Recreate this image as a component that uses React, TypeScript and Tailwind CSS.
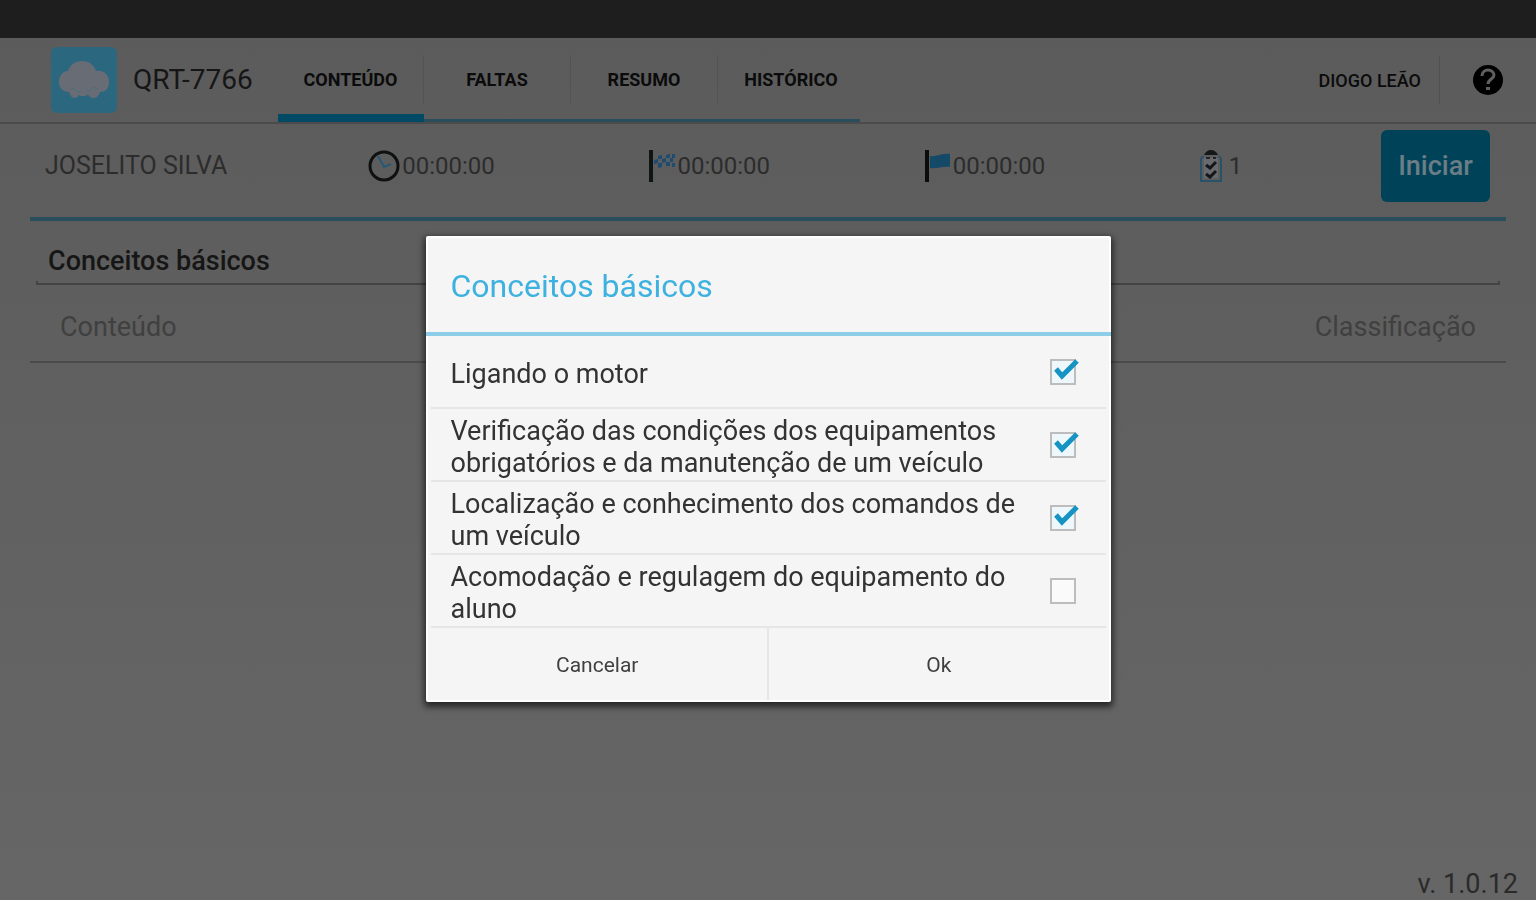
import { useState } from "react";

const tabs = ["CONTEÚDO", "FALTAS", "RESUMO", "HISTÓRICO"];

const tabWidths = ["w-[146px]", "w-[147px]", "w-[147px]", "w-[142px] pl-1"];

const lessons = [
  { id: "motor", label: "Ligando o motor", done: true },
  { id: "equipamentos", label: "Verificação das condições dos equipamentos obrigatórios e da manutenção de um veículo", done: true },
  { id: "comandos", label: "Localização e conhecimento dos comandos de um veículo", done: true },
  { id: "acomodacao", label: "Acomodação e regulagem do equipamento do aluno", done: false },
];

function CloudLogo() {
  return (
    <svg viewBox="0 0 66 66" className="size-[66px] shrink-0" aria-hidden="true">
      <rect width="66" height="66" rx="6" fill="#2c6780" />
      <path
        d="M18 45c-6 0-10-4-10-10 0-7 4-11 9-11 2-6 7-10 14-10s12 4 14 10c8-1 13 4 13 11s-4 10-9 10c-1 3-3 6-6 6s-5-1-6-4c-1 2-3 2-5 2s-3 0-4-1c-1 2-3 3-5 3-2 0-4-3-5-6z"
        fill="#686c75"
      />
      <g fill="none" stroke="#4e6c7b" strokeWidth="1">
        <path d="M19 43c2-2 5-2 6 0s3 3 5 1M36 43c2 2 4 1 5-1s5-2 6 1" />
      </g>
    </svg>
  );
}

function ClockIcon() {
  return (
    <svg viewBox="0 0 32 32" className="size-8" fill="none" aria-hidden="true">
      <circle cx="16" cy="16" r="14" stroke="#0f1111" strokeWidth="3" />
      <path d="M10 6l6 11 7-3" stroke="#285878" strokeWidth="2" />
    </svg>
  );
}

function CheckeredFlagIcon() {
  return (
    <svg viewBox="0 0 28 32" className="h-8 w-7" aria-hidden="true">
      <path d="M0 0h4v32H0z" fill="#0f1515" />
      <g fill="#1d4c70">
        <path d="M5 10l4-1v4l-4 1zM9 6l4-1v4l-4 0zM9 13l4 0v4l-4 1zM13 9l4-1v4l-4 1zM17 5l4-1v4l-4 0zM17 12l4 0v4l-4 0zM21 8l3 0v4h-3zM23 4h3v4h-3zM23 13h3v4h-3z" />
      </g>
    </svg>
  );
}

function FlagIcon() {
  return (
    <svg viewBox="0 0 28 32" className="h-8 w-7" aria-hidden="true">
      <path d="M0 0h4v32H0z" fill="#0a0c0d" />
      <path d="M5 6c6 1 12-3 20-2v13c-8-1-13 2-20 1z" fill="#144a68" />
    </svg>
  );
}

function ClipboardIcon() {
  return (
    <svg viewBox="0 0 24 34" className="h-[34px] w-6" fill="none" aria-hidden="true">
      <path d="M4 7L2 10v22h20V10l-2-3" stroke="#29526a" strokeWidth="2" />
      <path d="M5 9h14v20H5z" fill="#686b6d" />
      <path d="M5 6c1-3 4-5 7-5s6 2 7 5z" fill="#151818" />
      <path d="M7 9h4M14 9h3" stroke="#222627" strokeWidth="2" />
      <path d="M7 16l4 3 6-6M7 25l4 3 6-6" stroke="#141618" strokeWidth="3" />
    </svg>
  );
}

function Header() {
  return (
    <header className="flex h-[86px] items-stretch border-b-2 border-[#4b4b4b] pl-[51px]">
      <div className="flex w-[227px] shrink-0 items-center gap-4 text-[28px] text-[#161616]">
        <CloudLogo />
        <h1>QRT-7766</h1>
      </div>
      <nav className="flex">
        {tabs.map((tab, i) => (
          <a
            key={tab}
            href={"#" + tab.toLowerCase()}
            className={
              (i === 0 ? "border-b-8 border-[#004a66] pt-[6px] " : "border-b-3 border-[#2a4d5b] pt-px ") +
              "flex items-center text-[18px] font-bold text-[#0b0b0b] " +
              tabWidths[i]
            }
          >
            <span className={i < 3 ? "flex h-12 flex-1 items-center justify-center border-r border-[#535353]" : "flex h-12 flex-1 items-center justify-center"}>
              {tab}
            </span>
          </a>
        ))}
      </nav>
      <div className="ml-auto flex items-center pr-8">
        <span className="flex h-12 items-center border-r border-[#505050] pr-[18px] text-[18px] font-medium text-[#0b0b0b]">DIOGO LEÃO</span>
        <button type="button" aria-label="Ajuda" className="ml-8">
          <svg viewBox="0 0 32 32" className="size-8" aria-hidden="true">
            <circle cx="16" cy="16" r="15" fill="#000" />
            <path d="M10 12c0-4 3-6 6-6s6 2 6 5c0 4-6 4-6 9" fill="none" stroke="#606060" strokeWidth="3" />
            <path d="M14 23h4v3h-4z" fill="#606060" />
          </svg>
        </button>
      </div>
    </header>
  );
}

function StatusRow() {
  return (
    <section className="mx-[30px] grid h-[97px] grid-cols-[323fr_281fr_275fr_274fr_182fr_109px] border-b-4 border-[#294d5b] pr-4 pl-[15px] text-[24px] text-[#2c2c2c]">
      <span className="flex h-[84px] items-center text-[25px]">JOSELITO SILVA</span>
      <span className="flex h-[84px] items-center gap-0.5"><ClockIcon />00:00:00</span>
      <span className="flex h-[84px] items-center"><CheckeredFlagIcon />00:00:00</span>
      <span className="flex h-[84px] items-center"><FlagIcon />00:00:00</span>
      <span className="flex h-[84px] items-center gap-1.5"><ClipboardIcon />1</span>
      <button type="button" className="mt-[6px] h-[72px] rounded-md bg-[#004358] text-[27px] font-medium text-[#6b7d86]">
        Iniciar
      </button>
    </section>
  );
}

function CheckRow({ label, checked, onToggle }: { label: string; checked: boolean; onToggle: () => void }) {
  return (
    <li className="mx-[3px] border-b-2 border-[#e6e6e6]">
      <label className="flex h-[71px] items-center justify-between pr-[30px] pl-5">
        <span className="w-[570px] pt-1 text-[27px] leading-8 text-[#333]">{label}</span>
        <span className="relative flex size-[26px] shrink-0">
          <input
            type="checkbox"
            checked={checked}
            onChange={onToggle}
            className="size-[26px] appearance-none border-2 border-[#bdbdbd] bg-[#fafafa] checked:bg-[#eef8fc]"
          />
          {checked && (
            <svg viewBox="0 0 30 26" className="pointer-events-none absolute top-0 left-0 h-[26px] w-[30px]" fill="none" aria-hidden="true">
              <path d="M6 10l6 7L27 2" stroke="#1594c4" strokeWidth="5" />
            </svg>
          )}
        </span>
      </label>
    </li>
  );
}

export default function App() {
  const [items, setItems] = useState(lessons);

  const toggle = (id: string) => {
    setItems(items.map((item) => (item.id === id ? { ...item, done: !item.done } : item)));
  };

  return (
    <div className="flex min-h-screen flex-col bg-linear-to-b from-[#5b5b5b] to-[#666] font-['Roboto',sans-serif]">
      <div className="h-[38px] bg-[#1e1e1e]" />
      <Header />
      <StatusRow />

      <main className="mx-[30px] flex-1">
        {/* Category picker */}
        <div className="mx-[6px] pt-5">
          <select aria-label="Categoria" className="block h-[40px] w-full appearance-none pl-3 text-[27px] font-medium text-[#161616]">
            <option>Conceitos básicos</option>
          </select>
          <div className="h-1 border-x-2 border-b-2 border-[#434343]" />
        </div>

        <table className="w-full border-b-2 border-[#4b4b4b] text-[27px] text-[#404040]">
          <thead>
            <tr className="h-[77px]">
              <th className="pt-2 pl-[30px] text-left font-normal">Conteúdo</th>
              <th className="pt-2 pr-[30px] text-right font-normal">Classificação</th>
            </tr>
          </thead>
        </table>
      </main>

      <footer className="pr-[18px] text-right text-[27px] leading-8 text-[#2a2a2a]">v. 1.0.12</footer>

      {/* Dialog sits centred below the system bar */}
      <div className="fixed inset-0 flex items-center justify-center pt-[38px]">
        <div role="dialog" aria-labelledby="dialog-title" className="w-[685px] rounded-xs border-2 border-white bg-[#f5f5f5] shadow-[0_3px_6px_2px_rgba(0,0,0,0.6)]">
          <h2 id="dialog-title" className="-mx-0.5 flex h-[98px] items-center border-b-4 border-[#8dcde8] pt-px pl-[25px] text-[32px] text-[#3db2e0]">
            Conceitos básicos
          </h2>
          <ul>
            {items.map((item) => (
              <CheckRow key={item.id} label={item.label} checked={item.done} onToggle={() => toggle(item.id)} />
            ))}
          </ul>
          <div className="flex h-[72px] text-[21px] text-[#404040]">
            <button type="button" className="flex-1 border-r-2 border-[#e6e6e6] pt-1">Cancelar</button>
            <button type="button" className="flex-1 pt-1">Ok</button>
          </div>
        </div>
      </div>
    </div>
  );
}
